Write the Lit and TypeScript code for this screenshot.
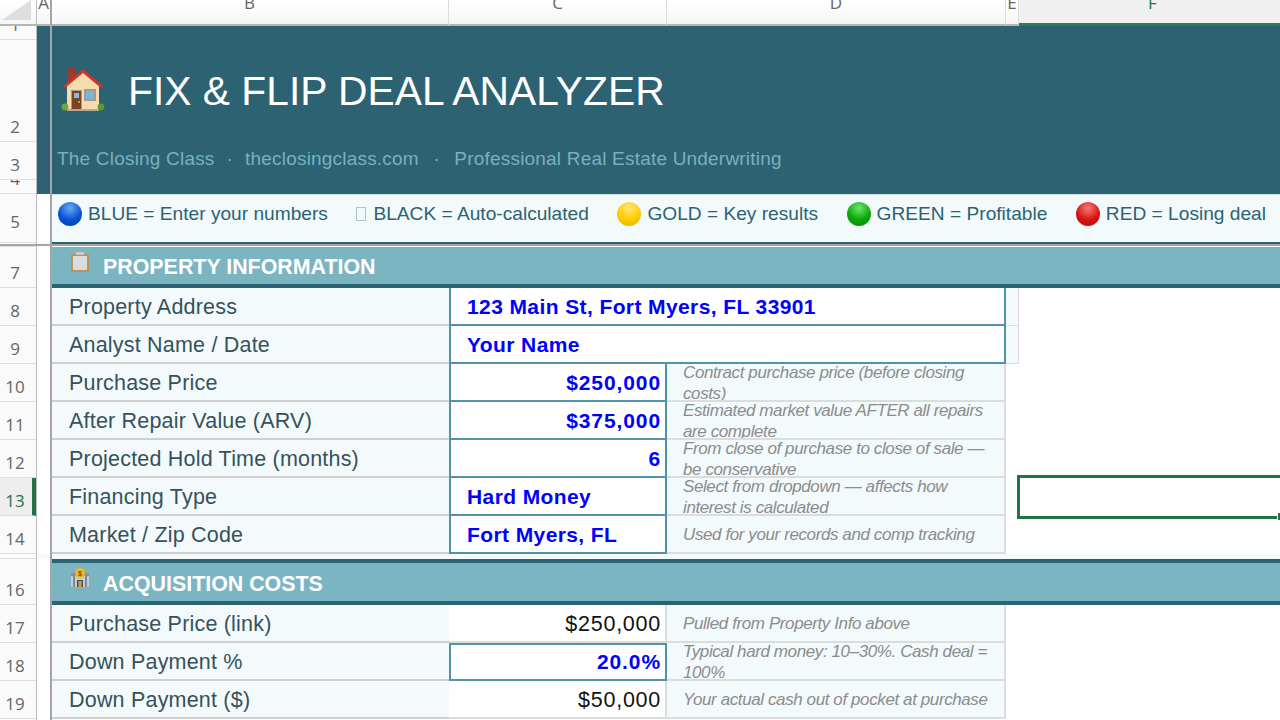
import { LitElement, html, css, svg } from "lit";
import { customElement } from "lit/decorators.js";

// row header: [label, height]
const ROW_HEADS: [string, number][] = [
  ["1", 14], ["2", 102], ["3", 38], ["4", 14], ["5", 49], ["", 4], ["7", 41],
  ["8", 38], ["9", 38], ["10", 38], ["11", 38], ["12", 38], ["13", 38], ["14", 38],
  ["15", 5], ["16", 46], ["17", 38], ["18", 38], ["19", 38], ["20", 38],
];

const LEGEND = [
  { tone: "blue", text: "BLUE = Enter your numbers" },
  { tone: "tofu", text: "BLACK = Auto-calculated" },
  { tone: "gold", text: "GOLD = Key results" },
  { tone: "green", text: "GREEN = Profitable" },
  { tone: "red", text: "RED = Losing deal" },
];

const houseIcon = svg`<svg class="house" viewBox="0 0 44 44" width="44" height="44">
  <path d="M7 0h7v9l-7 6z" fill="#9c3a2e"/>
  <path d="M6 17 22 3l16 14v25H6z" fill="#f5dcae"/>
  <path d="M2 18 22 1l20 17-2 2L22 5 4 20z" fill="#d2342a"/>
  <path d="M10 22h11v19H10z" fill="#a39a8a"/>
  <path d="M11 23h9v18h-9z" fill="#7d4328"/>
  <path d="M13 25h5v5h-5z" fill="#7cc0e8"/>
  <circle cx="18" cy="34" r="1" fill="#e8b33c"/>
  <path d="M23 21h12v12H23z" fill="#a89a84"/>
  <path d="M25 23h8v8h-8z" fill="#74b7e6"/>
  <path d="M6 41h32v2H6z" fill="#b9a98e"/>
  <circle cx="4" cy="39" r="3.4" fill="#6fa832"/>
  <circle cx="40" cy="39" r="3.4" fill="#5c9a2c"/>
</svg>`;

const clipboardIcon = svg`<svg class="band-icon" viewBox="0 0 20 22" width="20" height="22">
  <rect x="1" y="3" width="18" height="18" rx="1" fill="#b8935e"/>
  <rect x="3" y="5" width="14" height="14" fill="#dcdcdc"/>
  <rect x="6" y="1" width="8" height="3" rx="1" fill="#c9ccce"/>
</svg>`;

const bankIcon = svg`<svg class="band-icon" viewBox="0 0 20 22" width="20" height="22">
  <path d="M1 7 10 2l9 5v2H1z" fill="#8a8f94"/>
  <path d="M1 9h18v11H1z" fill="#c6ccd1"/>
  <path d="M3 9h2v11H3zM15 9h2v11h-2z" fill="#7f878d"/>
  <path d="M7 13h6v7H7z" fill="#3f5560"/>
  <path d="M8.5 14h3v6h-3z" fill="#c9a53a"/>
  <circle cx="10" cy="6" r="5" fill="#eebb1c"/>
  <text x="10" y="8.5" font-size="7" font-weight="700" text-anchor="middle" fill="#6d4c00" font-family="Liberation Sans, sans-serif">$</text>
</svg>`;

@customElement("app-root")
export class AppRoot extends LitElement {
  static styles = css`
    :host {
      display: block;
      position: relative;
      width: 1280px;
      height: 720px;
      overflow: hidden;
      background: #fff;
      font-family: "Liberation Sans", Arial, sans-serif;
    }

    .col-heads {
      display: grid;
      grid-template-columns: 37px 14px 398px 218px 339px 13px 1fr;
      height: 26px;
      font-family: "Open Sans", sans-serif;
      font-size: 17px;
      line-height: 6px;
      color: #666;
      text-align: center;
      overflow: hidden;
    }
    .col-heads > div {
      height: 24px;
      background: linear-gradient(#fff, #f6f6f6);
      border-right: 1px solid #dcdcdc;
      border-bottom: 2px solid #b5b5b5;
      overflow: hidden;
    }
    .col-heads .corner {
      position: relative;
      border-right: 1px solid #bbb;
    }
    .corner::before {
      content: "";
      position: absolute;
      left: 2px;
      top: 0;
      width: 29px;
      height: 20px;
      background: #dedede;
      clip-path: polygon(100% 0, 100% 100%, 0 100%);
    }
    .col-heads .col-active {
      height: 23px;
      padding-left: 6px;
      background: #f0f0f0;
      color: #217346;
      border-right: none;
      border-bottom: 3px solid #2a7d4f;
    }

    .body {
      display: flex;
    }

    .row-heads {
      width: 37px;
      flex: none;
      box-sizing: border-box;
      border-right: 1px solid #bbb;
      background: #fafafa;
      font-family: "Open Sans", sans-serif;
      font-size: 17px;
      color: #666;
    }
    .row-head {
      box-sizing: border-box;
      display: flex;
      align-items: flex-end;
      justify-content: center;
      overflow: hidden;
      padding-right: 6px;
      border-bottom: 1px solid #dedede;
    }
    .row-head span {
      line-height: 20px;
      margin-bottom: 4px;
      flex: none;
    }
    .row-head.raised span {
      margin-bottom: 10px;
    }
    .row-head.on {
      background: #eeeeee;
      color: #217346;
      border-right: 4px solid #217346;
      padding-right: 2px;
    }

    .sheet {
      flex: 1;
      min-width: 0;
    }

    .banner {
      display: grid;
      grid-template-rows: 14px 102px 38px 14px;
      background: #2c6272;
    }
    .title {
      grid-row: 2;
      display: flex;
      align-items: center;
      gap: 23px;
      padding-left: 24px;
      font-size: 40.8px;
      color: #fff;
      white-space: pre;
    }
    .house {
      display: block;
      margin-bottom: 2px;
    }
    .subtitle {
      grid-row: 3;
      padding: 6px 0 0 20px;
      font-size: 19px;
      line-height: 22px;
      letter-spacing: 0.2px;
      color: #78b1c0;
      white-space: pre;
    }
    .sep {
      margin: 0 1px;
    }
    .sep.far {
      margin: 0 3.5px;
    }

    .legend-row {
      height: 50px;
      margin-left: 14px;
      box-sizing: border-box;
      display: flex;
      align-items: center;
      padding: 0 0 9px 7px;
      background: #f2fafc;
      border-top: 1px solid #cfe3e8;
      border-bottom: 2px solid #2c6272;
      color: #2c6272;
      font-size: 19.15px;
      white-space: nowrap;
    }
    .legend-item {
      display: flex;
      align-items: center;
      gap: 6px;
      margin-right: 28.5px;
    }
    .dot {
      width: 24px;
      height: 24px;
      border-radius: 50%;
      flex: none;
    }
    .dot.blue {
      background: radial-gradient(circle at 50% 25%, #6aa8f0, #0a52d4 55%, #003fa8);
    }
    .dot.gold {
      background: radial-gradient(circle at 50% 25%, #ffe77a, #ffcc00 55%, #e8a800);
    }
    .dot.green {
      background: radial-gradient(circle at 50% 25%, #6ee86a, #0aa80a 55%, #058a05);
    }
    .dot.red {
      background: radial-gradient(circle at 50% 25%, #f47a72, #d81414 55%, #b00c0c);
    }
    .dot.tofu {
      width: 8px;
      height: 12px;
      border-radius: 0;
      background: none;
      border: 1px solid #a8c4cc;
      margin-right: 1px;
    }

    .spacer {
      height: 3px;
      background: #f4fafc;
    }
    .spacer.short {
      height: 5px;
    }

    .band {
      margin-left: 14px;
      box-sizing: border-box;
      display: flex;
      align-items: center;
      gap: 13px;
      padding-left: 19px;
      background: #7cb5c2;
      border-bottom: 4px solid #2c6272;
      color: #fff;
      font-size: 21.4px;
      font-weight: 700;
      height: 41px;
    }
    .band span {
      margin-top: 3px;
    }
    .band.second {
      height: 46px;
      border-top: 4px solid #2c6272;
    }
    .band.second span {
      margin-top: 4px;
    }
    .band-icon {
      display: block;
      margin-top: -8px;
    }

    .row {
      display: grid;
      grid-template-columns: 398px 218px 339px 13px;
      margin-left: 14px;
      height: 38px;
    }
    .row > div {
      box-sizing: border-box;
      min-width: 0;
      overflow: hidden;
    }
    .label {
      padding: 2px 0 0 18px;
      line-height: 35px;
      font-size: 21.5px;
      letter-spacing: 0.2px;
      color: #34525c;
      background: #f4fafb;
      border-bottom: 2px solid #cfcfcf;
    }
    .value {
      padding: 2px 4px 0 6px;
      line-height: 35px;
      font-size: 21.5px;
      letter-spacing: 0.75px;
      text-align: right;
      color: #111;
      background: #fff;
      border-right: 2px solid #dcdcdc;
      border-bottom: 2px solid #dcdcdc;
      white-space: nowrap;
    }
    .value.input {
      padding-top: 1px;
      font-size: 21px;
      letter-spacing: 0.9px;
      color: #0000ff;
      font-weight: 700;
      border: 2px solid #4f94a8;
      border-top-width: 0;
    }
    .value.boxed {
      box-shadow: inset 0 2px #4f94a8;
    }
    .value.text {
      letter-spacing: 0.4px;
      text-align: left;
      padding-left: 16px;
    }
    .value.wide {
      grid-column: span 2;
    }
    .note {
      padding: 0 0 0 16px;
      font-size: 17px;
      line-height: 21px;
      font-style: italic;
      letter-spacing: -0.4px;
      white-space: nowrap;
      color: #8c8c8c;
      background: #f2fafc;
      border-right: 2px solid #dcdcdc;
      border-bottom: 2px solid #dcdcdc;
    }
    .note.two span {
      display: block;
      margin-top: -2px;
    }
    .note.one {
      line-height: 38px;
    }
    .tail {
      background: #f4fafb;
      border-right: 1px solid #dcdcdc;
      border-bottom: 1px solid #dcdcdc;
    }

    .freeze-v {
      position: absolute;
      left: 50px;
      top: 0;
      width: 2px;
      height: 720px;
      background: #a5a5a5;
    }
    .freeze-h {
      position: absolute;
      left: 0;
      top: 244px;
      width: 1280px;
      height: 2px;
      background: #a5a5a5;
    }
    .selection {
      position: absolute;
      left: 1017px;
      top: 475px;
      width: 300px;
      height: 44px;
      box-sizing: border-box;
      border: 3px solid #217346;
    }
    .handle {
      position: absolute;
      left: 1277px;
      top: 512px;
      width: 7px;
      height: 7px;
      background: #217346;
      border: 1px solid #fff;
    }
  `;

  renderRow(label: string, value: string, kind: string, note: string) {
    const two = note.includes("|");
    const wide = kind.includes("wide");
    return html`<div class="row">
      <div class="label">${label}</div>
      <div class="value ${kind}">${value}</div>
      ${wide
        ? html`<div class="tail"></div>`
        : html`<div class="note ${two ? "two" : "one"}">
            ${two
              ? html`<span>${note.split("|")[0]}<br />${note.split("|")[1]}</span>`
              : note}
          </div>`}
    </div>`;
  }

  render() {
    return html`
      <div class="col-heads">
        <div class="corner"></div>
        <div>A</div>
        <div>B</div>
        <div>C</div>
        <div>D</div>
        <div>E</div>
        <div class="col-active">F</div>
      </div>
      <div class="body">
        <div class="row-heads">
          ${ROW_HEADS.map(
            ([n, h]) => html`<div class="row-head ${n === "13" ? "on" : n === "5" ? "raised" : ""}" style="height:${h}px">
              <span>${n}</span>
            </div>`
          )}
        </div>
        <div class="sheet">
          <div class="banner">
            <div class="title">${houseIcon}<span>FIX &amp; FLIP DEAL ANALYZER</span></div>
            <div class="subtitle">The Closing Class<span class="sep">  ·  </span>theclosingclass.com<span class="sep far">  ·  </span>Professional Real Estate Underwriting</div>
          </div>
          <div class="legend-row">
            ${LEGEND.map(
              (l) => html`<div class="legend-item"><span class="dot ${l.tone}"></span>${l.text}</div>`
            )}
          </div>
          <div class="spacer"></div>
          <div class="band">${clipboardIcon}<span>PROPERTY INFORMATION</span></div>
          ${this.renderRow("Property Address", "123 Main St, Fort Myers, FL 33901", "input text wide", "")}
          ${this.renderRow("Analyst Name / Date", "Your Name", "input text wide", "")}
          ${this.renderRow("Purchase Price", "$250,000", "input", "Contract purchase price (before closing|costs)")}
          ${this.renderRow("After Repair Value (ARV)", "$375,000", "input", "Estimated market value AFTER all repairs|are complete")}
          ${this.renderRow("Projected Hold Time (months)", "6", "input", "From close of purchase to close of sale —|be conservative")}
          ${this.renderRow("Financing Type", "Hard Money", "input text", "Select from dropdown — affects how|interest is calculated")}
          ${this.renderRow("Market / Zip Code", "Fort Myers, FL", "input text", "Used for your records and comp tracking")}
          <div class="spacer short"></div>
          <div class="band second">${bankIcon}<span>ACQUISITION COSTS</span></div>
          ${this.renderRow("Purchase Price (link)", "$250,000", "", "Pulled from Property Info above")}
          ${this.renderRow("Down Payment %", "20.0%", "input boxed", "Typical hard money: 10–30%. Cash deal =|100%")}
          ${this.renderRow("Down Payment ($)", "$50,000", "", "Your actual cash out of pocket at purchase")}
        </div>
      </div>
      <div class="freeze-v"></div>
      <div class="freeze-h"></div>
      <div class="selection"></div>
      <div class="handle"></div>
    `;
  }
}
